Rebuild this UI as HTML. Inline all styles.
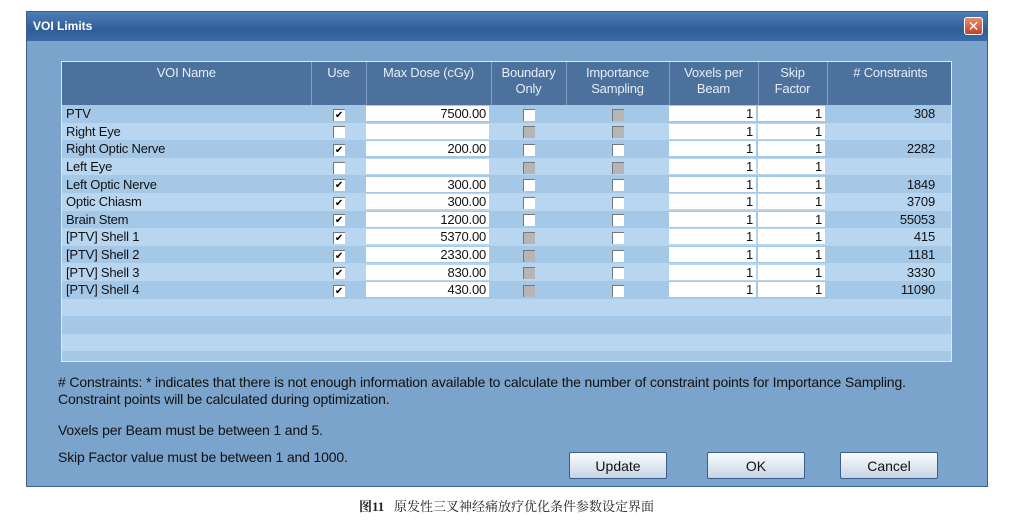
<!DOCTYPE html>
<html><head><meta charset="utf-8"><style>
body{margin:0;width:1013px;height:526px;background:#fff;position:relative;overflow:hidden;font-family:"Liberation Sans",Arial,sans-serif}
.dlg{position:absolute;left:26px;top:11px;width:962px;height:476px;background:#7ba4cd;border:1px solid #3d5f88;box-sizing:border-box}
.title{position:absolute;left:0;top:0;width:100%;height:29px;background:linear-gradient(#4f7fb8,#2e5d99 60%,#3b6aa5);color:#fff;font-weight:bold;font-size:12px;line-height:29px;padding-left:6px;box-sizing:border-box}
.x{position:absolute;right:4px;top:5px;width:19px;height:18px;background:linear-gradient(#e98a6d,#c2442a);border:1px solid #fff;border-radius:3px;color:#fff;font-size:14px;line-height:17px;text-align:center;box-sizing:border-box}
.grid{position:absolute;left:61px;top:61px;width:891px;height:301px;background:#b2d2ee;border:1px solid #dce9f5;box-sizing:border-box;overflow:hidden}
table{border-collapse:collapse;table-layout:fixed;width:891px;font-size:13px;color:#111;letter-spacing:-0.2px}
th{background:#4b719c;color:#e6eef7;font-weight:normal;height:40px;box-sizing:border-box;vertical-align:top;padding:3px 0 0 0;line-height:16px;font-size:13px;border-right:1px solid #7f9fc2;overflow:hidden}
td{height:17.6px;padding:0;line-height:17px;box-sizing:border-box}
tr:nth-child(odd) td{background:#b8d6f0}
tr:nth-child(even) td{background:#a5c8e7}
.n{padding-left:4px}
.in{display:block;background:#fff;margin:1px 2px 1px 0;height:15px;text-align:right;padding-right:3px;line-height:15px}
.c{text-align:center}
.cb{display:inline-block;width:11px;height:11px;background:#fff;border-top:1px solid #777;border-left:1px solid #777;vertical-align:middle;font-size:10px;line-height:11px;text-align:center;color:#000}
.g{background:#b5b5b5}
.r{text-align:right;padding-right:18px}
.t{position:absolute;font-size:14px;color:#111;letter-spacing:-0.15px}
.btn{position:absolute;top:452px;width:98px;height:27px;border:1px solid #3b5f8c;border-radius:2px;background:linear-gradient(#fafcff,#c6d4e4);font-size:14px;text-align:center;line-height:27px;color:#111;box-sizing:border-box}
.cap{position:absolute;top:496px;left:0;width:1013px;text-align:center;font-size:13px;font-family:"Liberation Serif","Noto Serif CJK SC",serif;color:#222}
</style></head><body>
<div class="dlg"><div class="title">VOI Limits</div><div class="x">✕</div></div>
<div class="grid"><table>
<colgroup><col style="width:249px"><col style="width:55px"><col style="width:125px"><col style="width:75px"><col style="width:103px"><col style="width:89px"><col style="width:69px"><col style="width:126px"></colgroup>
<tr style="height:43px"><th style="height:43px">VOI Name</th><th>Use</th><th>Max Dose (cGy)</th><th>Boundary<br>Only</th><th>Importance<br>Sampling</th><th>Voxels per<br>Beam</th><th>Skip<br>Factor</th><th style="border:0"># Constraints</th></tr>
<tr><td class="n">PTV</td><td class="c"><span class="cb">✔</span></td><td><span class="in">7500.00</span></td><td class="c"><span class="cb"></span></td><td class="c"><span class="cb g"></span></td><td><span class="in">1</span></td><td><span class="in">1</span></td><td class="r">308</td></tr>
<tr><td class="n">Right Eye</td><td class="c"><span class="cb"></span></td><td><span class="in"></span></td><td class="c"><span class="cb g"></span></td><td class="c"><span class="cb g"></span></td><td><span class="in">1</span></td><td><span class="in">1</span></td><td class="r"></td></tr>
<tr><td class="n">Right Optic Nerve</td><td class="c"><span class="cb">✔</span></td><td><span class="in">200.00</span></td><td class="c"><span class="cb"></span></td><td class="c"><span class="cb"></span></td><td><span class="in">1</span></td><td><span class="in">1</span></td><td class="r">2282</td></tr>
<tr><td class="n">Left Eye</td><td class="c"><span class="cb"></span></td><td><span class="in"></span></td><td class="c"><span class="cb g"></span></td><td class="c"><span class="cb g"></span></td><td><span class="in">1</span></td><td><span class="in">1</span></td><td class="r"></td></tr>
<tr><td class="n">Left Optic Nerve</td><td class="c"><span class="cb">✔</span></td><td><span class="in">300.00</span></td><td class="c"><span class="cb"></span></td><td class="c"><span class="cb"></span></td><td><span class="in">1</span></td><td><span class="in">1</span></td><td class="r">1849</td></tr>
<tr><td class="n">Optic Chiasm</td><td class="c"><span class="cb">✔</span></td><td><span class="in">300.00</span></td><td class="c"><span class="cb"></span></td><td class="c"><span class="cb"></span></td><td><span class="in">1</span></td><td><span class="in">1</span></td><td class="r">3709</td></tr>
<tr><td class="n">Brain Stem</td><td class="c"><span class="cb">✔</span></td><td><span class="in">1200.00</span></td><td class="c"><span class="cb"></span></td><td class="c"><span class="cb"></span></td><td><span class="in">1</span></td><td><span class="in">1</span></td><td class="r">55053</td></tr>
<tr><td class="n">[PTV] Shell 1</td><td class="c"><span class="cb">✔</span></td><td><span class="in">5370.00</span></td><td class="c"><span class="cb g"></span></td><td class="c"><span class="cb"></span></td><td><span class="in">1</span></td><td><span class="in">1</span></td><td class="r">415</td></tr>
<tr><td class="n">[PTV] Shell 2</td><td class="c"><span class="cb">✔</span></td><td><span class="in">2330.00</span></td><td class="c"><span class="cb g"></span></td><td class="c"><span class="cb"></span></td><td><span class="in">1</span></td><td><span class="in">1</span></td><td class="r">1181</td></tr>
<tr><td class="n">[PTV] Shell 3</td><td class="c"><span class="cb">✔</span></td><td><span class="in">830.00</span></td><td class="c"><span class="cb g"></span></td><td class="c"><span class="cb"></span></td><td><span class="in">1</span></td><td><span class="in">1</span></td><td class="r">3330</td></tr>
<tr><td class="n">[PTV] Shell 4</td><td class="c"><span class="cb">✔</span></td><td><span class="in">430.00</span></td><td class="c"><span class="cb g"></span></td><td class="c"><span class="cb"></span></td><td><span class="in">1</span></td><td><span class="in">1</span></td><td class="r">11090</td></tr>
<tr><td colspan="8"></td></tr><tr><td colspan="8"></td></tr><tr><td colspan="8"></td></tr><tr><td colspan="8"></td></tr>
</table></div>
<div class="t" style="left:58px;top:374px;line-height:17px;width:870px"># Constraints: * indicates that there is not enough information available to calculate the number of constraint points for Importance Sampling. Constraint points will be calculated during optimization.</div>
<div class="t" style="left:58px;top:422px">Voxels per Beam must be between 1 and 5.</div>
<div class="t" style="left:58px;top:449px">Skip Factor value must be between 1 and 1000.</div>
<div class="btn" style="left:569px">Update</div>
<div class="btn" style="left:707px">OK</div>
<div class="btn" style="left:840px">Cancel</div>
<div class="cap"><b>图11</b>&nbsp;&nbsp; 原发性三叉神经痛放疗优化条件参数设定界面</div>
</body></html>
